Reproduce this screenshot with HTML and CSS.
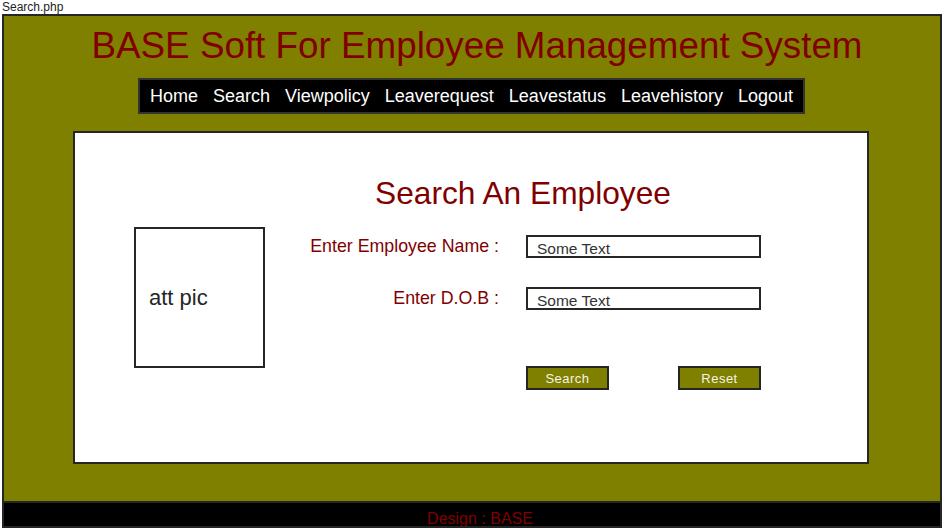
FILE: index.html
```html
<!DOCTYPE html>
<html lang="en">
<head>
<meta charset="utf-8">
<title>Search.php</title>
<link rel="stylesheet" href="styles.css">
</head>
<body>
<div class="filename">Search.php</div>
<div class="frame">
  <div class="main">
    <h1 class="title">BASE Soft For Employee Management System</h1>
    <nav class="nav">
      <a href="#">Home</a>
      <a href="#">Search</a>
      <a href="#">Viewpolicy</a>
      <a href="#">Leaverequest</a>
      <a href="#">Leavestatus</a>
      <a href="#">Leavehistory</a>
      <a href="#">Logout</a>
    </nav>
    <section class="panel">
      <div class="pic">att pic</div>
      <div class="form">
        <h2 class="heading">Search An Employee</h2>
        <div class="row row-first">
          <label class="label">Enter Employee Name :</label>
          <input class="field" type="text" value="Some Text">
        </div>
        <div class="row row-second">
          <label class="label">Enter D.O.B :</label>
          <input class="field" type="text" value="Some Text">
        </div>
        <div class="buttons">
          <button class="btn" type="button">Search</button>
          <button class="btn" type="button">Reset</button>
        </div>
      </div>
    </section>
  </div>
  <footer class="footer">Design : BASE</footer>
</div>
</body>
</html>
```
FILE: styles.css
```css
* { box-sizing: border-box; }
html, body { margin: 0; padding: 0; background: #fff; }
body { font-family: "Liberation Sans", Arial, sans-serif; overflow: hidden; }

.filename {
  height: 14px;
  padding-left: 2px;
  font-size: 12px;
  line-height: 14px;
  color: #222;
}

.frame {
  margin-left: 2px;
  width: 940px;
  height: 514px;
  border: 2px solid #262626;
  background: #808000;
}

.main {
  height: 485px;
  padding-top: 10px;
}

.title {
  margin: 0;
  padding-left: 10px;
  font-size: 36.8px;
  line-height: 40px;
  font-weight: normal;
  color: #800000;
  text-align: center;
}

.nav {
  display: flex;
  justify-content: center;
  gap: 15px;
  width: 667px;
  height: 36px;
  margin: 12px 0 0 134px;
  padding: 0 12px;
  background: #000;
  border: 2px solid #333;
}
.nav a {
  color: #fff;
  text-decoration: none;
  font-size: 18px;
  line-height: 32px;
}

.panel {
  display: flex;
  align-items: flex-start;
  width: 796px;
  height: 333px;
  margin: 17px 0 0 69px;
  padding: 42px 0 0 59px;
  background: #fff;
  border: 2px solid #262626;
}

.pic {
  display: flex;
  align-items: center;
  width: 131px;
  height: 141px;
  margin-top: 52px;
  margin-right: 20px;
  padding-left: 13px;
  border: 2px solid #262626;
  font-size: 22px;
  color: #262626;
}

.form { width: 476px; }

.heading {
  margin: 0;
  font-size: 31.7px;
  line-height: 37px;
  font-weight: normal;
  color: #800000;
  text-align: center;
}

.row {
  display: grid;
  grid-template-columns: 214px 235px;
  column-gap: 27px;
  align-items: center;
}
.row-first { margin-top: 23px; }
.row-second { margin-top: 29px; }

.label {
  font-size: 17.8px;
  line-height: 21px;
  color: #800000;
  text-align: right;
}

.field {
  width: 235px;
  height: 23px;
  margin: 0;
  padding: 4px 0 0 9px;
  border: 2px solid #262626;
  border-radius: 0;
  background: #fff;
  font-family: "Liberation Sans", Arial, sans-serif;
  font-size: 15.5px;
  color: #333;
  outline: none;
}

.buttons {
  display: flex;
  justify-content: space-between;
  margin-left: 241px;
  margin-top: 56px;
  width: 235px;
}

.btn {
  width: 83px;
  height: 24px;
  margin: 0;
  padding: 0;
  border: 2px solid #262620;
  border-radius: 0;
  background: #808000;
  font-family: "Liberation Sans", Arial, sans-serif;
  font-size: 13px;
  letter-spacing: 0.5px;
  color: #f4f4e8;
}

.footer {
  height: 25px;
  border-top: 2px solid #262626;
  background: #000;
  padding-top: 7px;
  padding-left: 16px;
  font-size: 16px;
  line-height: 18px;
  color: #800000;
  text-align: center;
  overflow: hidden;
}
```
